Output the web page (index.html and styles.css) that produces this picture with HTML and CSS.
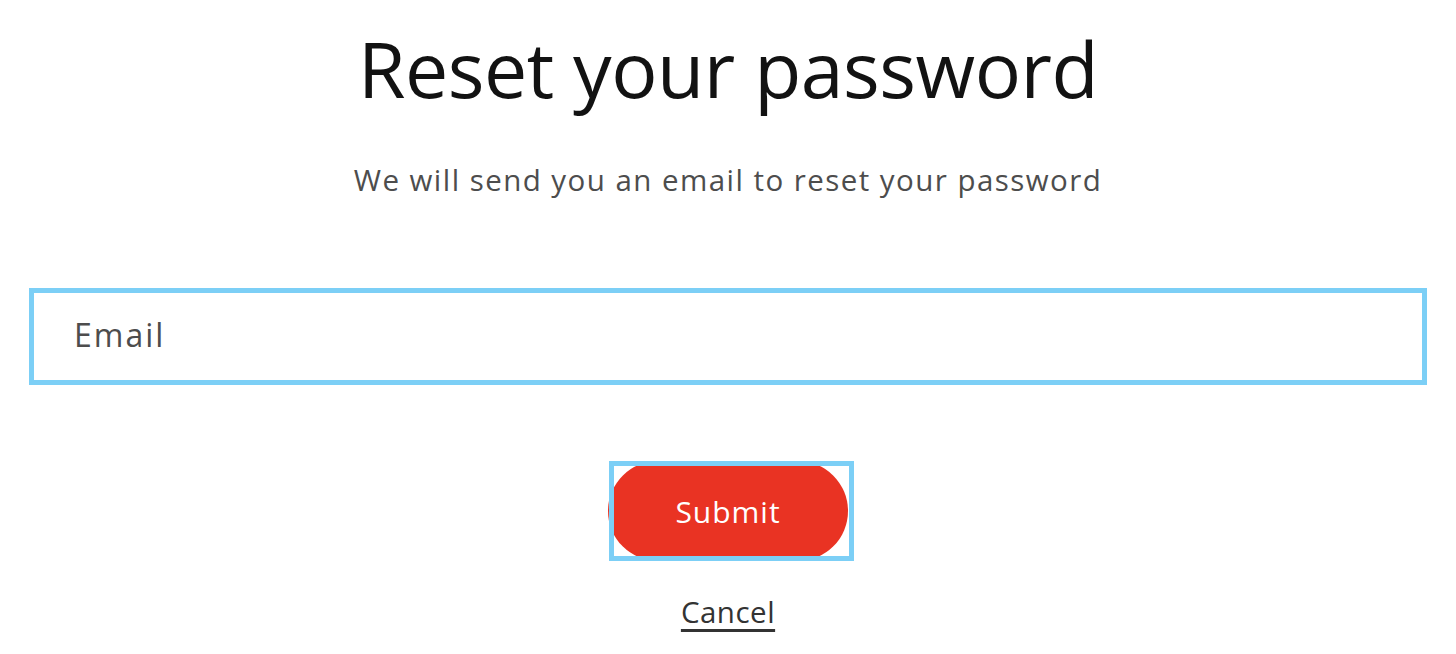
FILE: index.html
```html
<!DOCTYPE html>
<html lang="en">
<head>
<meta charset="utf-8">
<title>Reset your password</title>
<link rel="stylesheet" href="styles.css">
</head>
<body>
<main class="page">
  <h1 class="title">Reset your password</h1>
  <p class="subtitle">We will send you an email to reset your password</p>
  <form class="form">
    <div class="field"><span class="field-label">Email</span></div>
    <div class="actions">
      <button type="button" class="btn">Submit</button>
      <span class="focus-ring"></span>
    </div>
    <a class="cancel" href="#">Cancel</a>
  </form>
</main>
</body>
</html>
```
FILE: styles.css
```css
html, body {
  margin: 0;
  padding: 0;
  background: #ffffff;
}

body {
  font-family: "Open Sans", "Noto Sans", sans-serif;
  color: #121212;
}

.page {
  display: flex;
  flex-direction: column;
  align-items: center;
}

.title {
  margin: 23px 0 0;
  font-size: 77px;
  font-weight: 400;
  line-height: 92px;
  letter-spacing: -0.5px;
  color: #121212;
}

.subtitle {
  margin: 43px 0 0;
  font-size: 29.5px;
  line-height: 44px;
  letter-spacing: 1.45px;
  color: #4d4d4d;
}

.form {
  align-self: stretch;
  margin-top: 86px;
  padding: 0 29px;
  display: flex;
  flex-direction: column;
  align-items: center;
}

.field {
  width: 100%;
  height: 97px;
  box-sizing: border-box;
  border: 5px solid #7ccff6;
  padding: 20px 0 0 40px;
  font-size: 32px;
  line-height: 44px;
  letter-spacing: 2px;
  color: #4d4d4d;
}

.actions {
  position: relative;
  margin-top: 76px;
  display: flex;
}

.btn {
  width: 240px;
  height: 100px;
  border: none;
  border-radius: 50px;
  background: #e93323;
  color: #ffffff;
  font-family: "Open Sans", "Noto Sans", sans-serif;
  font-size: 30px;
  letter-spacing: 1px;
  padding: 0;
  display: flex;
  align-items: center;
  justify-content: center;
}

.focus-ring {
  position: absolute;
  top: 0;
  bottom: 0;
  left: 1px;
  right: -6px;
  border: 5px solid #7ccff6;
  pointer-events: none;
}

.cancel {
  margin-top: 29px;
  font-size: 29.5px;
  line-height: 44px;
  letter-spacing: 0.5px;
  color: #333333;
  text-decoration: underline;
  text-decoration-thickness: 3px;
  text-underline-offset: 6px;
}
```
